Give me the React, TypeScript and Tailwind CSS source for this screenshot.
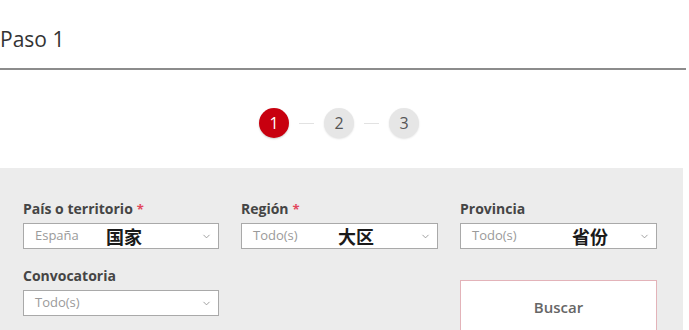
import { ChevronDown } from "lucide-react";

type SelectProps = {
  value: string;
  note?: string;
  noteLeft?: string;
};

function Select({ value, note, noteLeft }: SelectProps) {
  return (
    <div className="relative flex h-[26px] items-center border border-[#a9a9a9] bg-white pl-[11px] pr-[6px]">
      <span className="flex-1 text-[13px] text-[#9a9a9a]">{value}</span>
      <ChevronDown className="h-[11px] w-[11px] text-[#8a8a8a]" strokeWidth={1.75} />
      {note && (
        <span
          className={`absolute top-[1px] text-[18px] font-bold leading-[22px] text-[#1a1a1a] [font-family:'Noto_Sans_CJK_SC',sans-serif] ${noteLeft}`}
        >
          {note}
        </span>
      )}
    </div>
  );
}

function Field({
  label,
  required,
  children,
}: {
  label: string;
  required?: boolean;
  children: React.ReactNode;
}) {
  return (
    <div className="flex flex-col">
      <label className="mb-[4px] text-[14px] font-bold leading-[20px] text-[#454545]">
        {label}
        {required && <span className="ml-[4px] text-[13px] text-[#e2475d]">*</span>}
      </label>
      {children}
    </div>
  );
}

function Step({ n, active }: { n: number; active?: boolean }) {
  return (
    <div
      className={
        active
          ? "flex h-[30px] w-[30px] items-center justify-center rounded-full bg-[#c8000f] text-[16px] text-white shadow-[0_1px_2px_rgba(0,0,0,0.2)]"
          : "flex h-[30px] w-[30px] items-center justify-center rounded-full bg-[#e6e6e6] text-[16px] text-[#555] shadow-[0_1px_2px_rgba(0,0,0,0.12)]"
      }
    >
      {n}
    </div>
  );
}

export default function App() {
  return (
    <div className="h-[330px] w-[689px] overflow-hidden bg-white [font-family:'Open_Sans',sans-serif]">
      <h1 className="pt-[25px] text-[21px] leading-[28px] text-[#333]">Paso 1</h1>
      <div className="mt-[15px] h-[2px] w-[686px] bg-[#8c8c8c]" />

      <div className="ml-[259px] mt-[38px] flex items-center">
        <Step n={1} active />
        <div className="mx-[10px] h-[1px] w-[15px] bg-[#e2e2e2]" />
        <Step n={2} />
        <div className="mx-[10px] h-[1px] w-[15px] bg-[#e2e2e2]" />
        <Step n={3} />
      </div>

      <div className="mt-[30px] h-[200px] w-[683px] bg-[#ececec] pl-[23px] pt-[31px]">
        <div className="grid grid-cols-[196px_197px_197px] items-start gap-x-[22px] gap-y-[17px]">
          <Field label="País o territorio" required>
            <Select value="España" note="国家" noteLeft="left-[82px]" />
          </Field>
          <Field label="Región" required>
            <Select value="Todo(s)" note="大区" noteLeft="left-[96px]" />
          </Field>
          <Field label="Provincia">
            <Select value="Todo(s)" note="省份" noteLeft="left-[111px]" />
          </Field>

          <Field label="Convocatoria">
            <Select value="Todo(s)" />
          </Field>
          <div />
          <button className="mt-[14px] h-[54px] border border-[#e3b3b9] bg-white text-[15px] font-semibold text-[#666]">
            Buscar
          </button>
        </div>
      </div>
    </div>
  );
}
